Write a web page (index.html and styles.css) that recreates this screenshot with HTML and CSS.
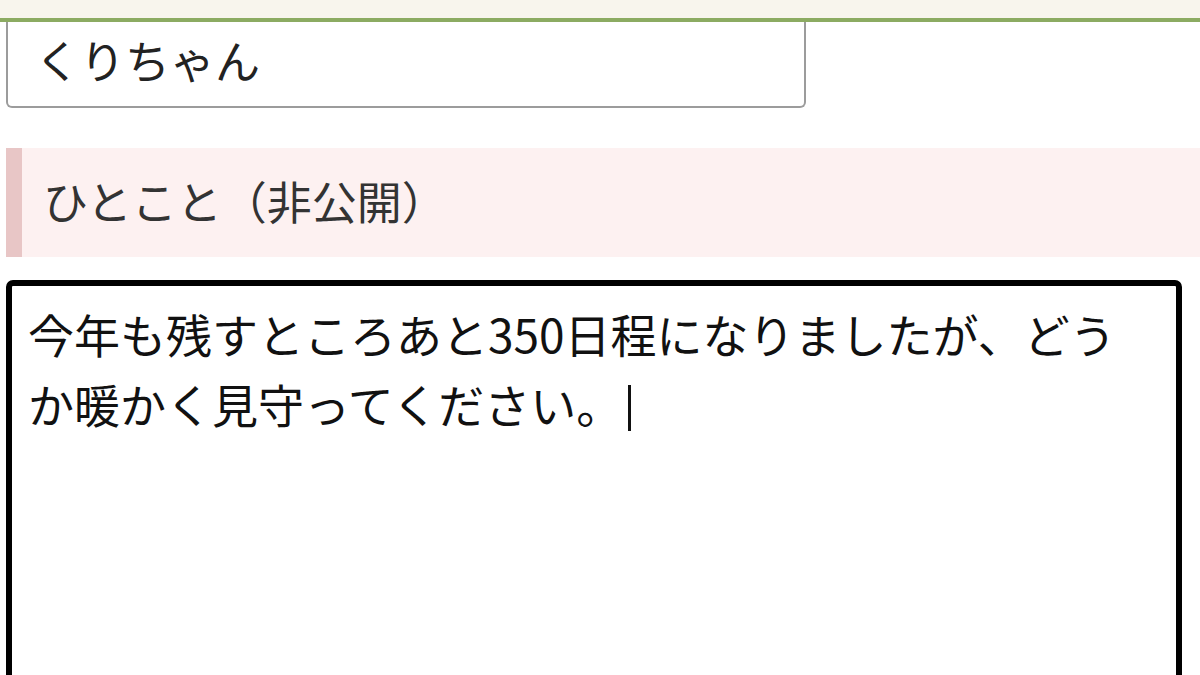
FILE: index.html
```html
<!DOCTYPE html>
<html lang="ja">
<head>
  <meta charset="utf-8">
  <title>プロフィール編集</title>
  <link rel="stylesheet" href="styles.css">
</head>

<body>
  <div class="topbar"></div>

  <form class="profile-form">
    <input class="name-input" type="text" name="nickname" value="くりちゃん" />

    <div class="section-title">ひとこと（非公開）</div>

    <div class="comment-box">今年も残すところあと350日程になりましたが、どうか暖かく見守ってください。<span class="caret"></span></div>
  </form>
</body>
</html>
```

FILE: styles.css
```css
body {
  font-family: "Noto Sans CJK JP", "Noto Sans", sans-serif;
  background-color: #fff;
  margin: 0;
  padding: 0;
}

/* top strip */
.topbar {
  height: 18px;
  background-color: #f8f5ed;
  border-bottom: 4px solid #8cab62;
}

.profile-form {
  padding-left: 6px;
}

.name-input {
  display: block;
  box-sizing: border-box;
  width: 800px;
  height: 86px;
  padding: 0 0 10px 27px;
  font-family: inherit;
  font-size: 45px;
  color: #222;
  background-color: #fff;
  border: 2px solid #9c9c9c;
  border-top: none;
  border-radius: 0 0 6px 6px;
  outline: none;
}

.section-title {
  margin-top: 40px;
  height: 109px;
  box-sizing: border-box;
  display: flex;
  align-items: center;
  padding-left: 21px;
  padding-bottom: 4px;
  font-size: 45px;
  color: #333;
  background-color: #fdf1f1;
  border-left: 16px solid #e8c6c6;
}

.comment-box {
  margin-top: 23px;
  box-sizing: border-box;
  width: 1176px;
  height: 520px;
  padding: 12px 40px 0 16px;
  font-size: 46px;
  line-height: 70px;
  color: #111;
  border: 6px solid #000;
  border-radius: 7px;
}

.caret {
  display: inline-block;
  width: 3px;
  height: 46px;
  margin-left: 6px;
  background-color: #111;
  vertical-align: -8px;
}
```
